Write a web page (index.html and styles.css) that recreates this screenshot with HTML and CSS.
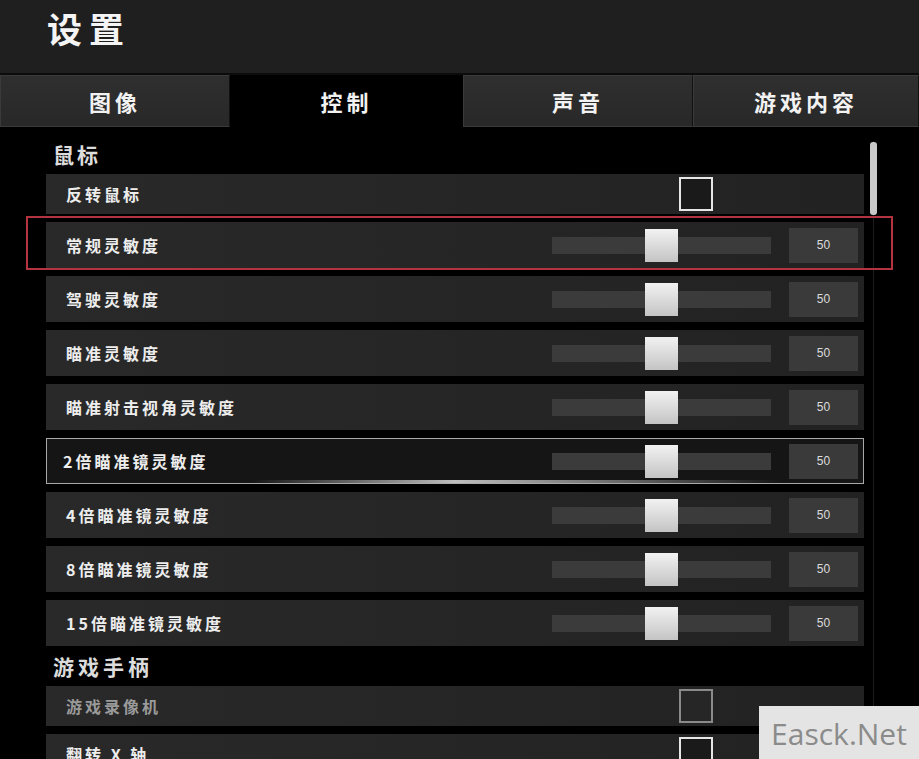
FILE: index.html
```html
<!DOCTYPE html>
<html lang="zh-CN">

<head>
    <meta charset="UTF-8">
    <meta name="viewport" content="width=device-width, initial-scale=1.0">
    <title>设置</title>
    <link rel="stylesheet" href="styles.css">
</head>

<body>
    <header class="top">
        <h1>设置</h1>
    </header>

    <nav class="tabs">
        <a class="tab" href="#">图像</a>
        <a class="tab active" href="#">控制</a>
        <a class="tab" href="#">声音</a>
        <a class="tab" href="#">游戏内容</a>
    </nav>

    <main class="content">
        <div class="scroll-track"></div>
        <div class="scroll-thumb"></div>

        <!-- 鼠标 -->
        <h2 class="section">鼠标</h2>
        <div class="rows">
            <div class="row short">
                <span class="label">反转鼠标</span>
                <span class="check"></span>
            </div>
            <div class="row">
                <div class="mark"></div>
                <span class="label">常规灵敏度</span>
                <div class="slider"><span class="thumb"></span></div>
                <span class="value">50</span>
            </div>
            <div class="row">
                <span class="label">驾驶灵敏度</span>
                <div class="slider"><span class="thumb"></span></div>
                <span class="value">50</span>
            </div>
            <div class="row">
                <span class="label">瞄准灵敏度</span>
                <div class="slider"><span class="thumb"></span></div>
                <span class="value">50</span>
            </div>
            <div class="row">
                <span class="label">瞄准射击视角灵敏度</span>
                <div class="slider"><span class="thumb"></span></div>
                <span class="value">50</span>
            </div>
            <div class="row focused">
                <span class="label">2倍瞄准镜灵敏度</span>
                <div class="slider"><span class="thumb"></span></div>
                <span class="value">50</span>
            </div>
            <div class="row">
                <span class="label">4倍瞄准镜灵敏度</span>
                <div class="slider"><span class="thumb"></span></div>
                <span class="value">50</span>
            </div>
            <div class="row">
                <span class="label">8倍瞄准镜灵敏度</span>
                <div class="slider"><span class="thumb"></span></div>
                <span class="value">50</span>
            </div>
            <div class="row">
                <span class="label">15倍瞄准镜灵敏度</span>
                <div class="slider"><span class="thumb"></span></div>
                <span class="value">50</span>
            </div>
        </div>

        <!-- 游戏手柄 -->
        <h2 class="section pad">游戏手柄</h2>
        <div class="rows">
            <div class="row short disabled">
                <span class="label">游戏录像机</span>
                <span class="check"></span>
            </div>
            <div class="row short">
                <span class="label">翻转 X 轴</span>
                <span class="check"></span>
            </div>
        </div>
    </main>

    <div class="watermark">Easck.Net</div>
</body>

</html>
```

FILE: styles.css
```css
html,
body {
    height: 100%;
}

body {
    font-family: "Noto Sans CJK SC", "Noto Sans", sans-serif;
    margin: 0;
    padding: 0;
    background-color: #000;
    color: #ececec;
    overflow: hidden;
}

.top {
    background-color: #1f1f1f;
    height: 75px;
    border-bottom: 2px solid #0c0c0c;
    box-sizing: border-box;
    padding-left: 47px;
}

.top h1 {
    margin: 0;
    font-size: 35px;
    font-weight: 700;
    letter-spacing: 7px;
    line-height: 56px;
    color: #f4f4f4;
}

.tabs {
    display: grid;
    grid-template-columns: 230px 233px 230px 1fr;
    height: 52px;
}

.tab {
    display: flex;
    justify-content: center;
    align-items: center;
    background: linear-gradient(#2f2f2f, #282828);
    border: 1px solid #3a3a3a;
    border-right-color: #111;
    color: #f2f2f2;
    text-decoration: none;
    font-size: 22px;
    font-weight: 700;
    letter-spacing: 4px;
}

.tab.active {
    background: #000;
    border-color: #000;
}

.content {
    position: relative;
    padding: 0 55px 0 46px;
}

.scroll-track {
    position: absolute;
    left: 873px;
    top: 14px;
    bottom: 0;
    width: 1px;
    background-color: #1c1c1c;
}

.scroll-thumb {
    position: absolute;
    left: 870px;
    top: 15px;
    width: 7px;
    height: 73px;
    border-radius: 3px;
    background-color: #c9c9c9;
}

.section {
    margin: 0;
    padding-left: 7px;
    height: 47px;
    line-height: 54px;
    font-size: 21px;
    font-weight: 700;
    letter-spacing: 3px;
    color: #dcdcdc;
}

.section.pad {
    height: 40px;
    line-height: 40px;
    letter-spacing: 4px;
}

.rows {
    display: flex;
    flex-direction: column;
    gap: 8px;
}

.row {
    position: relative;
    display: flex;
    align-items: center;
    height: 46px;
    box-sizing: border-box;
    padding: 0 6px 0 20px;
    background: linear-gradient(90deg, #292929, #252525 60%, #222 100%);
}

.row.short {
    height: 40px;
}

.label {
    flex: 1;
    font-size: 16px;
    font-weight: 700;
    letter-spacing: 3px;
    color: #ededed;
}

.disabled .label {
    color: #9a9a9a;
}

.check {
    width: 34px;
    height: 34px;
    box-sizing: border-box;
    border: 2px solid #e6e6e6;
    background-color: #1a1a1a;
    margin-right: 145px;
}

.disabled .check {
    border-color: #8a8a8a;
    background-color: #262626;
}

.slider {
    position: relative;
    width: 219px;
    height: 17px;
    background-color: #3b3b3b;
    margin-right: 18px;
}

.thumb {
    position: absolute;
    left: 93px;
    top: -8px;
    width: 33px;
    height: 33px;
    background: linear-gradient(#f2f2f2, #c4c4c4);
}

.value {
    width: 69px;
    height: 35px;
    line-height: 35px;
    text-align: center;
    background-color: #3a3a3a;
    font-family: "Liberation Sans", Arial, sans-serif;
    font-size: 12px;
    color: #dcdcdc;
}

.row.focused {
    background: #151515;
    border: 1px solid #a8a8a8;
    padding-left: 16px;
    padding-right: 5px;
}

.row.focused::after {
    content: "";
    position: absolute;
    left: 0;
    right: 0;
    bottom: 0;
    height: 3px;
    background: linear-gradient(90deg, transparent 25%, #bdbdbd 50%, #6a6a6a 70%, transparent 90%);
}

/* 红框标注 */
.mark {
    position: absolute;
    left: -20px;
    right: -29px;
    top: -6px;
    bottom: -2px;
    border: 2px solid #b3343f;
}

.watermark {
    position: fixed;
    right: 0;
    bottom: 0;
    width: 160px;
    height: 53px;
    line-height: 55px;
    text-align: center;
    background-color: #e4e4e4;
    color: #8b8b8b;
    font-family: "Open Sans", sans-serif;
    font-size: 30px;
}
```
